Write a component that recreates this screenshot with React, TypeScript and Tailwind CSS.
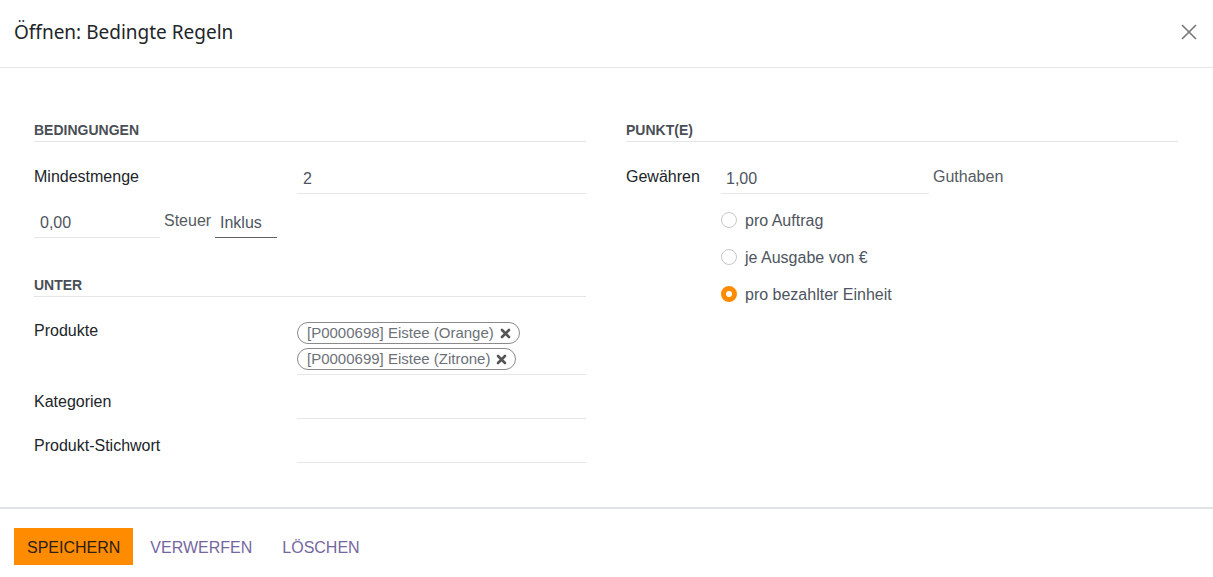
import { useState } from 'react';

const SectionHeader = ({ title }: { title: string }) => (
  <div className="pt-[4px] pb-[2px] border-b border-[#e3e5e8] text-[14px] leading-[17px] font-bold text-[#4a4f55] uppercase">
    {title}
  </div>
);

const Tag = ({ label }: { label: string }) => (
  <div className="flex items-center h-[22px] pl-[9px] pr-[8px] border border-[#8a8a8a] rounded-full text-[15px] leading-[18px] text-[#6c7178] w-fit">
    <span>{label}</span>
    <svg width="11" height="11" viewBox="0 0 11 11" className="ml-[6px]">
      <path d="M2 2 L9 9 M9 2 L2 9" stroke="#555" strokeWidth="2.6" strokeLinecap="round" />
    </svg>
  </div>
);

const Radio = ({ label, checked, onClick }: { label: string; checked: boolean; onClick: () => void }) => (
  <div className="flex items-center h-[18px] cursor-pointer" onClick={onClick}>
    {checked ? (
      <span className="w-[16px] h-[16px] rounded-full border-[5px] border-[#ff8c00] bg-white" />
    ) : (
      <span className="w-[16px] h-[16px] rounded-full border border-[#c8c8c8] bg-white" />
    )}
    <span className="ml-[8px] pt-[1px] text-[16px] leading-[18px] text-[#4e5560]">{label}</span>
  </div>
);

const App = () => {
  const [mode, setMode] = useState('unit');

  return (
    <div className="w-[1213px] h-[577px] bg-white flex flex-col text-[#212529]" style={{ fontFamily: '"Liberation Sans", Arial, sans-serif' }}>
      {/* header */}
      <div className="h-[68px] flex items-center justify-between pl-[14px] pr-[16px] border-b border-[#e3e5e8] shrink-0">
        <h4 className="text-[19px] leading-[24px] text-[#212529] pb-[3px]" style={{ fontFamily: '"Noto Sans", "Open Sans", sans-serif' }}>
          Öffnen: Bedingte Regeln
        </h4>
        <button className="w-[16px] h-[16px] mb-[3px]" title="Schließen">
          <svg width="16" height="16" viewBox="0 0 16 16">
            <path d="M1 1 L15 15 M15 1 L1 15" stroke="#777" strokeWidth="1.6" />
          </svg>
        </button>
      </div>

      {/* body */}
      <div className="flex-1 flex gap-[40px] pl-[34px] pr-[35px] pt-[50px]">
        {/* left column */}
        <div className="w-[552px]">
          <SectionHeader title="Bedingungen" />

          <div className="flex h-[34px] mt-[18px]">
            <div className="w-[263px] pt-[8px] text-[16px] leading-[18px]">Mindestmenge</div>
            <div className="w-[289px] border-b border-[#e6e6e6] pl-[6px] pt-[10px] text-[16px] leading-[18px] text-[#4e5560]">2</div>
          </div>

          <div className="flex h-[34px] mt-[10px]">
            <div className="w-[126px] border-b border-[#e6e6e6] pl-[6px] pt-[10px] text-[16px] leading-[18px] text-[#4e5560]">0,00</div>
            <div className="ml-[4px] w-[51px] pt-[8px] text-[16px] leading-[18px] text-[#555b62]">Steuer</div>
            <div className="w-[62px] border-b border-[#5f6368] pl-[5px] pt-[10px] text-[16px] leading-[18px] text-[#4e5560]">Inklus</div>
          </div>

          <div className="mt-[35px]">
            <SectionHeader title="Unter" />
          </div>

          <div className="flex mt-[17px]">
            <div className="w-[263px] pt-[8px] text-[16px] leading-[18px]">Produkte</div>
            <div className="w-[289px] border-b border-[#e6e6e6] pt-[8px] pb-[4px] flex flex-col gap-[4px]">
              <Tag label="[P0000698] Eistee (Orange)" />
              <Tag label="[P0000699] Eistee (Zitrone)" />
            </div>
          </div>

          <div className="flex h-[34px] mt-[10px]">
            <div className="w-[263px] pt-[8px] text-[16px] leading-[18px]">Kategorien</div>
            <div className="w-[289px] border-b border-[#e6e6e6]" />
          </div>

          <div className="flex h-[34px] mt-[10px]">
            <div className="w-[263px] pt-[8px] text-[16px] leading-[18px]">Produkt-Stichwort</div>
            <div className="w-[289px] border-b border-[#e6e6e6]" />
          </div>
        </div>

        {/* right column */}
        <div className="w-[552px]">
          <SectionHeader title="Punkt(e)" />

          <div className="flex h-[34px] mt-[18px]">
            <div className="w-[95px] pt-[8px] text-[16px] leading-[18px]">Gewähren</div>
            <div className="w-[208px] border-b border-[#e6e6e6] pl-[5px] pt-[10px] text-[16px] leading-[18px] text-[#4e5560]">1,00</div>
            <div className="ml-[4px] pt-[8px] text-[16px] leading-[18px] text-[#555b62]">Guthaben</div>
          </div>

          <div className="ml-[95px] mt-[17px] flex flex-col gap-[19px]">
            <Radio label="pro Auftrag" checked={mode === 'order'} onClick={() => setMode('order')} />
            <Radio label="je Ausgabe von €" checked={mode === 'money'} onClick={() => setMode('money')} />
            <Radio label="pro bezahlter Einheit" checked={mode === 'unit'} onClick={() => setMode('unit')} />
          </div>
        </div>
      </div>

      {/* footer */}
      <div className="h-[70px] shrink-0 border-t-2 border-[#dfe2e6] pl-[14px] pt-[19px] flex items-start gap-[4px]">
        <button className="h-[37px] px-[13px] pt-[2px] bg-[#ff8c00] text-[16px] text-[#2a2018] uppercase">Speichern</button>
        <button className="h-[37px] px-[13px] pt-[2px] text-[16px] text-[#7467a0] uppercase">Verwerfen</button>
        <button className="h-[37px] px-[13px] pt-[2px] text-[16px] text-[#7467a0] uppercase">Löschen</button>
      </div>
    </div>
  );
};

export default App;
